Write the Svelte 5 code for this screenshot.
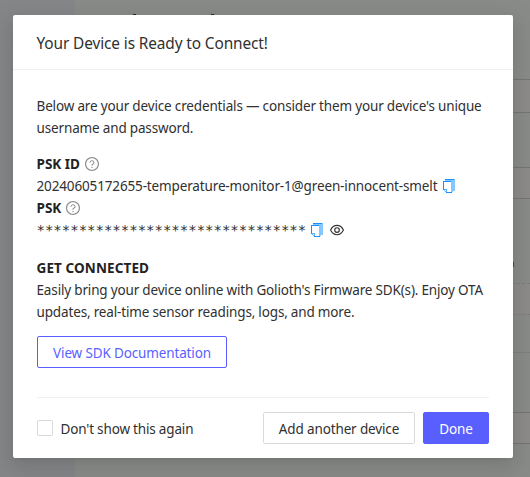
<script>
  const mask = '*'.repeat(32);
  const rows = [
    { top: 79, height: 34, kind: 'field' },
    { top: 167, height: 32, kind: 'field' },
    { top: 283, height: 32, kind: 'dashed' },
    { top: 352, height: 1, kind: 'rule' },
    { top: 412, height: 32, kind: 'field' }
  ];
  let hidden = $state(false);
</script>

{#snippet help()}
  <svg class="help" viewBox="64 64 896 896" aria-hidden="true">
    <path d="M512 64C264.600 64 64 264.600 64 512s200.600 448 448 448 448-200.600 448-448S759.400 64 512 64zm0 820c-205.400 0-372-166.600-372-372s166.600-372 372-372 372 166.600 372 372-166.600 372-372 372z" />
    <path d="M623.600 316.700C593.600 290.400 554 276 512 276s-81.600 14.500-111.600 40.700C369.200 344 352 380.700 352 420v7.600c0 4.400 3.600 8 8 8h48c4.400 0 8-3.600 8-8V420c0-44.100 43.100-80 96-80s96 35.900 96 80c0 31.100-22 59.600-56.100 72.700-21.200 8.100-39.200 22.300-52.100 40.900-13.100 19-19.900 41.800-19.900 64.900V620c0 4.400 3.600 8 8 8h48c4.400 0 8-3.600 8-8v-22.700a48.300 48.300 0 0 1 30.900-44.800c59-22.700 97.100-74.700 97.100-132.500.1-39.300-17.100-76-48.300-103.300zM472 732a40 40 0 1 0 80 0 40 40 0 1 0-80 0z" />
  </svg>
{/snippet}

{#snippet copy()}
  <svg class="copy" viewBox="0 0 12 14" aria-hidden="true" shape-rendering="crispEdges">
    <path fill="#85c8ff" d="M2 0h10v12H10v1H8V3H2z" />
    <path fill="#1890ff" d="M2 0h9v1H2zM0 2h8v1H1v8H0zM3 13h6v1H3z" />
    <path fill="#5cb4ff" d="M1 10h3v3H3v-2H1zM1 11h1v1H1zM2 12h1v1H2z" />
  </svg>
{/snippet}

<div class="page">
  <aside></aside>
  <div class="backdrop">
    <i class="tick first"></i><i class="tick second"></i><i class="tick third"></i>
    {#each rows as row}
      <div class="row {row.kind}" style="top: {row.top}px; height: {row.height}px"></div>
    {/each}
  </div>

  <div class="modal" role="dialog" aria-labelledby="title">
    <header><h1 id="title">Your Device is Ready to Connect!</h1></header>
    <main>
      <p>Below are your device credentials — consider them your device's unique username and password.</p>
      <section>
        <div class="line"><strong>PSK ID</strong>{@render help()}</div>
        <div class="line id">20240605172655-temperature-monitor-1@green-innocent-smelt{@render copy()}</div>
        <div class="line"><strong>PSK</strong>{@render help()}</div>
        <div class="line"><span class="mask">{mask}</span>{@render copy()}
          <svg class="eye" viewBox="0 0 14 14" fill="none" stroke="#333" stroke-width="1.150" aria-hidden="true">
            <path d="M.6 7C2.100 3.700 4.200 2.300 7 2.300S11.900 3.700 13.400 7C11.900 10.300 9.800 11.700 7 11.700S2.100 10.300 .6 7z" />
            <circle cx="7" cy="7" r="2.300" />
          </svg>
        </div>
      </section>
      <section class="sdk">
        <strong>GET CONNECTED</strong>
        <div>Easily bring your device online with Golioth's Firmware SDK(s). Enjoy OTA updates, real-time sensor readings, logs, and more.</div>
      </section>
      <button class="outline">View SDK Documentation</button>
    </main>
    <footer>
      <label><input type="checkbox" bind:checked={hidden} /><span>Don't show this again</span></label>
      <button class="another">Add another device</button>
      <button class="primary">Done</button>
    </footer>
  </div>
</div>

<style>
  :global(body) { margin: 0; }
  * { box-sizing: border-box; }
  .page {
    display: flex;
    position: relative;
    width: 530px;
    height: 477px;
    overflow: hidden;
    background: #898b89;
    color: #303030;
    font: 13.5px/22px "Noto Sans", sans-serif;
    letter-spacing: -.14px;
  }
  aside { width: 75px; background: #858688; }
  .backdrop { position: relative; flex: 1; }
  .row { position: absolute; left: 20px; right: 0; }
  .field { border: solid #747574; border-width: 1px 0; background: #8c8b8a; }
  .dashed { border: dashed #7b7c7b; border-width: 1px 0; background: #8c8b8a; }
  .rule { background: #7d7f7d; }
  .tick { position: absolute; top: 14px; width: 3px; height: 1px; background: #252629; }
  .first { left: 58px; }
  .second { left: 136px; }
  .third { top: 262px; left: 437px; width: 2px; height: 5px; background: #4b4c4b; }
  .modal {
    position: absolute;
    top: 15px;
    left: 13px;
    width: 500px;
    height: 443px;
    border-radius: 2px;
    background: #fff;
    box-shadow: 0 3px 6px -4px rgba(0,0,0,.12), 0 6px 16px rgba(0,0,0,.08), 0 9px 28px 8px rgba(0,0,0,.05);
  }
  header { height: 55px; padding: 18px 23.5px 14px; border-bottom: 1px solid #f0f0f0; }
  h1 { margin: 0; font-size: 15.4px; font-weight: 400; line-height: 22px; letter-spacing: -.11px; }
  main { padding: 25px 23.5px 0; }
  p { margin: 0 0 14px; word-spacing: -.15px; }
  section { margin-bottom: 16px; }
  .sdk { margin-bottom: 13px; word-spacing: -.2px; }
  .sdk strong { letter-spacing: .13px; }
  strong { color: #222; font-weight: 700; letter-spacing: 0; }
  .line { display: flex; align-items: center; height: 22px; white-space: nowrap; }
  svg { flex: none; display: block; }
  .help { width: 14px; height: 14px; margin-left: 5px; fill: #8c8c8c; }
  .copy { width: 12px; height: 14px; margin-left: 5px; }
  .id .copy { margin-left: 6px; }
  .eye { width: 14px; height: 14px; margin-left: 7px; }
  .mask { font-family: "DejaVu Sans Mono", monospace; font-size: 14px; letter-spacing: 0; }
  button {
    height: 32px;
    padding: 2px 0 0;
    border: 1px solid #d9d9d9;
    border-radius: 2px;
    background: #fff;
    color: #303030;
    font: inherit;
    letter-spacing: inherit;
    white-space: nowrap;
  }
  .outline { display: block; width: 190px; margin-left: .5px; border-color: #595fff; color: #595fff; }
  .another { width: 152px; }
  footer {
    display: flex;
    align-items: center;
    gap: 8px;
    height: 47px;
    margin: 29px 24px 0;
    padding-top: 14px;
    border-top: 1px solid #f0f0f0;
  }
  label { display: flex; align-items: center; gap: 7.5px; margin-right: auto; word-spacing: -.2px; }
  label span { padding-top: 2px; }
  input {
    appearance: none;
    width: 16px;
    height: 16px;
    margin: 0;
    border: 1px solid #d9d9d9;
    border-radius: 2px;
    background: #fff;
  }
  .primary { width: 66px; border-color: #595fff; background: #595fff; color: #fff; }
</style>
